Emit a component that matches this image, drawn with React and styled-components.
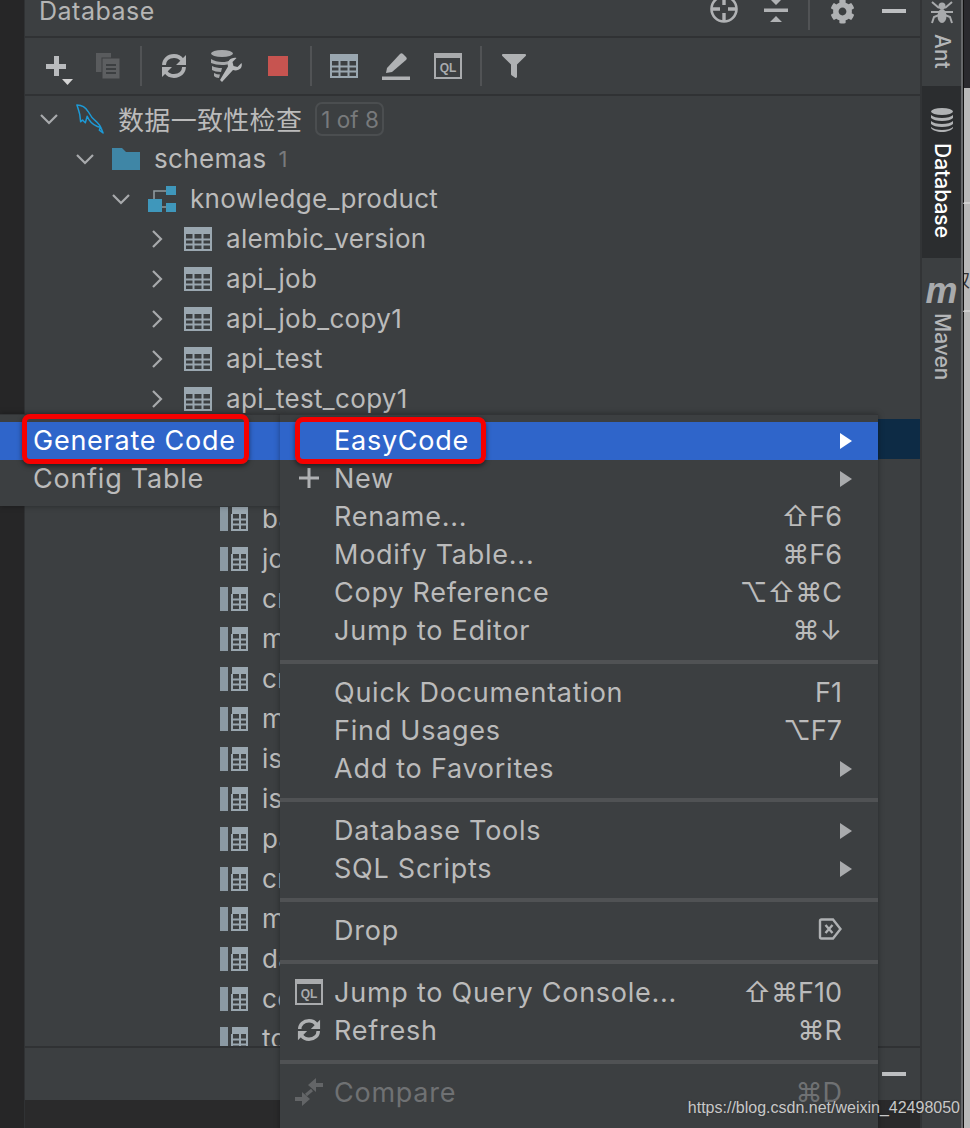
import React from 'react';
import styled, { createGlobalStyle } from 'styled-components';
import { FaCog, FaFilter } from 'react-icons/fa';

const GlobalStyle = createGlobalStyle`
  html, body {
    margin: 0;
    padding: 0;
    background: #3c3f41;
  }
  body {
    font-family: Inter, "DejaVu Sans", "Noto Sans CJK SC", sans-serif;
  }
`;

const Screen = styled.div`
  position: relative;
  width: 970px;
  height: 1128px;
  overflow: hidden;
  display: flex;
  color: #bbbbbb;
`;

const LeftStrip = styled.div`
  width: 24px;
  flex: none;
  background: #262627;
  border-right: 1px solid #303234;
`;

const Panel = styled.div`
  width: 895px;
  flex: none;
  display: flex;
  flex-direction: column;
  background: #3c3f41;
  border-right: 2px solid #323436;
`;

const Header = styled.div`
  height: 36px;
  flex: none;
  display: flex;
  align-items: flex-start;
  padding-left: 14px;
  border-bottom: 2px solid #303234;
`;

const Title = styled.div`
  flex: 1;
  font-size: 25px;
  line-height: 22px;
  letter-spacing: 0.5px;
  color: #b5b5b5;
`;

const HeaderButton = styled.div`
  width: 52px;
  height: 22px;
  display: flex;
  align-items: center;
  justify-content: center;
  color: #afb1b3;
`;

const HeaderDivider = styled.div`
  width: 2px;
  height: 30px;
  margin: 0 6px;
  background: #515355;
`;

const Toolbar = styled.div`
  height: 56px;
  flex: none;
  display: flex;
  align-items: center;
  padding-left: 8px;
  border-bottom: 2px solid #303234;
`;

const ToolButton = styled.div`
  width: ${p => p.$w || 52}px;
  height: 40px;
  display: flex;
  align-items: center;
  justify-content: center;
  color: #afb1b3;
`;

const ToolDivider = styled.div`
  width: 2px;
  height: 40px;
  margin: 0 6px 0 ${p => p.$ml || 6}px;
  background: #515355;
`;

const Tree = styled.div`
  flex: 1;
  min-height: 0;
  overflow: hidden;
  padding-top: 3px;
`;

const Row = styled.div`
  height: 40px;
  display: flex;
  align-items: center;
  padding-left: ${p => p.$depth * 36 + 13}px;
  background: ${p => (p.$selected ? '#0d2b45' : 'transparent')};
  white-space: nowrap;
`;

const Chevron = styled.div`
  width: 21px;
  height: 22px;
  flex: none;
  margin-right: 17px;
  display: flex;
  align-items: center;
  justify-content: center;
  color: #a8aaac;
`;

const NoChevron = styled.div`
  width: 38px;
  flex: none;
`;

const RowIcon = styled.div`
  width: 28px;
  height: 28px;
  flex: none;
  margin-right: 14px;
  display: flex;
  align-items: center;
  justify-content: center;
`;

const RowText = styled.span`
  margin-bottom: 2px;
  font-size: 26px;
  letter-spacing: 0.32px;
  color: #bbbbbb;
`;

const Count = styled.span`
  margin-left: 12px;
  font-size: 22px;
  color: #787a7c;
`;

const Badge = styled.span`
  margin-left: 13px;
  height: 30px;
  padding: 0 3px 0 4px;
  display: inline-flex;
  align-items: center;
  border: 2px solid #4b4e50;
  border-radius: 7px;
  font-size: 22.5px;
  color: #787a7c;
`;

const BottomBar = styled.div`
  height: 52px;
  flex: none;
  display: flex;
  align-items: center;
  justify-content: flex-end;
  padding-right: 14px;
  border-top: 2px solid #303234;
`;

const BottomMinus = styled.div`
  width: 24px;
  height: 4px;
  background: #bdbfc1;
`;

const StatusBar = styled.div`
  height: 28px;
  flex: none;
  background: #2a2a2b;
`;

const SideBar = styled.div`
  width: 39px;
  flex: none;
  display: flex;
  flex-direction: column;
  background: #3c3f41;
`;

const SideTab = styled.div`
  height: ${p => p.$h}px;
  flex: none;
  display: flex;
  flex-direction: column;
  align-items: center;
  padding-top: ${p => p.$pt}px;
  box-sizing: border-box;
  background: ${p => (p.$active ? '#2b2d2f' : 'transparent')};
`;

const SideLabel = styled.span`
  margin-top: ${p => p.$mt}px;
  writing-mode: vertical-rl;
  font-size: 21px;
  line-height: 22px;
  font-weight: 500;
  color: ${p => (p.$active ? '#ffffff' : '#b4b6b8')};
`;

const MavenMark = styled.span`
  font-family: "Liberation Sans", sans-serif;
  font-size: 36px;
  font-weight: 700;
  font-style: italic;
  line-height: 24px;
  color: #a8aaac;
`;

const EdgeColumn = styled.div`
  flex: 1;
  display: flex;
  flex-direction: column;
  border-left: 2px solid #66686a;
`;

const EdgeDark = styled.div`
  height: 88px;
  background: #2a2a2e;
  border-left: 1px solid #111111;
`;

const EdgeLight = styled.div`
  position: relative;
  height: ${p => p.$h}px;
  flex: ${p => (p.$h ? 'none' : 1)};
  overflow: hidden;
  box-sizing: border-box;
  background: #b9b9b9;
  border-left: 1px solid #111111;
  border-bottom: ${p => (p.$h ? '2px solid #d0d0d0' : 'none')};
`;

const EdgeGlyph = styled.span`
  position: absolute;
  left: -12px;
  top: 67px;
  font-size: 18px;
  line-height: 20px;
  color: #333333;
`;

const MenuPanel = styled.div`
  position: absolute;
  top: 414px;
  left: ${p => p.$left}px;
  width: ${p => p.$width}px;
  height: ${p => p.$height}px;
  box-sizing: border-box;
  padding-top: 7px;
  background: #3c3f41;
  border-top: 1px solid #323436;
  box-shadow: 0 0 6px rgba(0, 0, 0, 0.35);
`;

const MenuItem = styled.div`
  height: 38px;
  display: flex;
  align-items: center;
  box-sizing: border-box;
  padding-left: ${p => p.$pl}px;
  padding-right: 26px;
  padding-bottom: 2px;
  font-size: 27px;
  letter-spacing: 0.75px;
  white-space: nowrap;
  background: ${p => (p.$active ? '#2f65ca' : 'transparent')};
  color: ${p => (p.$active ? '#ffffff' : p.$disabled ? '#6f7173' : '#bbbbbb')};
`;

const MenuGlyph = styled.div`
  width: 40px;
  margin-left: -26px;
  flex: none;
  display: flex;
  align-items: center;
  justify-content: center;
  visibility: ${p => (p.$show ? 'visible' : 'hidden')};
`;

const MenuLabel = styled.span`
  flex: 1;
  margin-left: 5px;
`;

const Shortcut = styled.span`
  margin-right: 10px;
  font-size: 27px;
  letter-spacing: 0;
`;

const Arrow = styled.span`
  width: 0;
  height: 0;
  margin-top: 2px;
  border-left: 12px solid ${p => (p.$active ? '#ffffff' : '#a9abad')};
  border-top: 8px solid transparent;
  border-bottom: 8px solid transparent;
`;

const MenuDivider = styled.div`
  height: 4px;
  margin: 10px 0;
  background: #505254;
`;

const RedBox = styled.div`
  position: absolute;
  top: ${p => p.$top}px;
  left: ${p => p.$left}px;
  width: ${p => p.$width}px;
  height: ${p => p.$height}px;
  box-sizing: border-box;
  border: 5px solid #f50000;
  border-radius: 8px;
  box-shadow: 0 2px 5px rgba(0, 0, 0, 0.5);
`;

const Watermark = styled.div`
  position: absolute;
  right: 10px;
  top: 1098px;
  font-family: "Liberation Sans", sans-serif;
  font-size: 16px;
  line-height: 20px;
  color: #c8c8c8;
  text-shadow: 0 0 2px rgba(40, 40, 40, 0.6);
`;

const ChevronDown = () => (
  <svg width="20" height="12" viewBox="0 0 20 12" fill="none" stroke="currentColor" strokeWidth="2.2">
    <path d="M2 2l8 8 8-8" />
  </svg>
);

const ChevronRight = () => (
  <svg width="12" height="20" viewBox="0 0 12 20" fill="none" stroke="currentColor" strokeWidth="2.2">
    <path d="M2 2l8 8-8 8" />
  </svg>
);

const TableIcon = () => (
  <svg width="28" height="24" viewBox="0 0 28 24">
    <rect width="28" height="7" fill="#9aa7b0" />
    <path d="M1 7v16h26V7M1 12.5h26M1 17.5h26M1 23h26M9.5 7v16M18.5 7v16" fill="none" stroke="#9aa7b0" strokeWidth="2" />
  </svg>
);

const BarTableIcon = () => (
  <svg width="28" height="24" viewBox="0 0 28 24">
    <rect width="8" height="24" fill="#8b99a3" />
    <rect x="12" width="16" height="7" fill="#9aa7b0" />
    <path d="M12 7v16h15V7M12 12.5h15M12 17.5h15M20 7v16" fill="none" stroke="#9aa7b0" strokeWidth="2" />
  </svg>
);

const DolphinIcon = () => (
  <svg width="30" height="32" viewBox="0 0 30 32" fill="none" stroke="#1d9ad6" strokeWidth="1.6" strokeLinejoin="round">
    <path d="M1 1c5 0 9 2 12 7 2 4 5 8 9 11 2 2 4 4 5 7l2 5-4-3 1-3-3-1c-5-2-9-6-11-11l-2 7-3-3-2 2-1-8C3 7 2 4 1 1z" />
  </svg>
);

const FolderIcon = () => (
  <svg width="28" height="22" viewBox="0 0 28 22">
    <path d="M0 0h10l4 4h14v18H0z" fill="#3f86a6" />
  </svg>
);

const SchemaIcon = () => (
  <svg width="28" height="26" viewBox="0 0 28 26">
    <rect x="18" width="10" height="9" fill="#3f97bb" />
    <rect y="13" width="14" height="13" fill="#3f97bb" />
    <rect x="18" y="17" width="10" height="9" fill="#3f97bb" />
    <path d="M6 13V5h12M14 21h4" fill="none" stroke="#8f9a9f" strokeWidth="1.6" />
  </svg>
);

const PlusIcon = () => (
  <svg width="30" height="38" viewBox="0 0 30 38">
    <path d="M11 9h5v8h7v5h-7v7h-5v-7H3v-5h8z" fill="#b9bbbd" />
    <path d="M19 32h11l-5.500 6z" fill="#d4d4d4" />
  </svg>
);

const CopyIcon = () => (
  <svg width="24" height="26" viewBox="0 0 24 26">
    <rect x="0" y="0" width="15" height="19" fill="#595b5d" />
    <rect x="6" y="5" width="18" height="21" fill="#5d5f61" stroke="#3c3f41" strokeWidth="1" />
    <path d="M10 12h10M10 16h10M10 20h10" stroke="#3c3f41" strokeWidth="2" />
  </svg>
);

const RefreshIcon = ({ size = 26 }) => (
  <svg width={size} height={size} viewBox="0 0 26 26" fill="none" stroke="#afb1b3" strokeWidth="3.8">
    <path d="M3 12c0-5 4-9 10-9 3 0 6 1 8 4" />
    <path d="M23 14c0 5-4 9-10 9-3 0-6-1-8-4" />
    <path d="M25 2v10h-10z M1 24V14h10z" fill="#afb1b3" stroke="none" />
  </svg>
);

const DbToolIcon = () => (
  <svg width="32" height="32" viewBox="0 0 32 32">
    <ellipse cx="12" cy="3.5" rx="11" ry="3.5" fill="#a6a8aa" />
    <path d="M1 9c3 2 7 3 11 3s6-.5 9-2l-2 4c-2 .6-4 1-7 1-4 0-8-1-11-2zM2 16c3 1.500 6 2 10 2l-1 4c-4 0-7-1-9-2zM4 23c2 1 4 1.500 6 1.500L9 28c-2 0-4-1-5-2z" fill="#a6a8aa" />
    <path d="M10 30l2 2 11-12c3 1 6 0 8-2 1-2 1-4 .5-5l-4 4-4-1-1-4 4-4c-3-.5-6 .5-7.500 2.500-1.500 2-1.500 4-1 6z" fill="#b7b9bb" />
  </svg>
);

const StopIcon = () => (
  <svg width="20" height="20" viewBox="0 0 20 20">
    <rect width="20" height="20" fill="#c75450" />
  </svg>
);

const PencilIcon = () => (
  <svg width="28" height="28" viewBox="0 0 28 28">
    <path d="M4 21l1-5L18 2c1-1 2-1 3 0l3 3c1 1 1 2 0 3L10 20z" fill="#b0b2b4" />
    <rect y="24.500" width="28" height="3.500" fill="#b0b2b4" />
  </svg>
);

const QlBox = styled.div`
  box-sizing: border-box;
  width: 28px;
  height: 26px;
  border: 2px solid #a9abad;
  border-top-width: 5px;
  display: flex;
  align-items: center;
  justify-content: center;
  font-family: "Liberation Sans", sans-serif;
  font-size: 12px;
  font-weight: 700;
  letter-spacing: 0;
  color: #a9abad;
`;

const TargetIcon = () => (
  <svg width="28" height="28" viewBox="0 0 28 28" fill="none" stroke="#b0b2b4" strokeWidth="2.6">
    <circle cx="14" cy="12" r="12.500" />
    <path d="M14 0v8M14 16v8M2 12h8M18 12h8" strokeWidth="3.4" />
  </svg>
);

const CollapseIcon = () => (
  <svg width="24" height="22" viewBox="0 0 24 22">
    <path d="M7 0h10l-5 5zM0 8.500h24v3.500H0zM12 16l6 6H6z" fill="#b0b2b4" />
  </svg>
);

const BugIcon = () => (
  <svg width="22" height="24" viewBox="0 0 22 24" fill="none" stroke="#a8aaac" strokeWidth="2">
    <ellipse cx="11" cy="16" rx="4.500" ry="7" fill="#a8aaac" stroke="none" />
    <circle cx="11" cy="6" r="3.500" fill="#a8aaac" stroke="none" />
    <path d="M1 2l7 6M21 2l-7 6M0 12h22M1 23l2-6 5-2M21 23l-2-6-5-2" />
  </svg>
);

const DbStackIcon = () => (
  <svg width="24" height="24" viewBox="0 0 24 24">
    <ellipse cx="12" cy="3.500" rx="11" ry="3.500" fill="#b0b2b4" />
    <path d="M1 7c2 2 6 3 11 3s9-1 11-3v3c-2 2-6 3-11 3S3 12 1 10zM1 13c2 2 6 3 11 3s9-1 11-3v3c-2 2-6 3-11 3S3 18 1 16zM1 19c2 2 6 3 11 3s9-1 11-3v1c-1 2-6 4-11 4S2 22 1 20z" fill="#b0b2b4" />
  </svg>
);

const DropIcon = () => (
  <svg width="24" height="22" viewBox="0 0 24 22" fill="none" stroke="#afb1b3" strokeWidth="2.4">
    <path d="M2 3a1.500 1.500 0 0 1 1.500-1.500H15l7.500 9.500-7.500 9.500H3.500A1.500 1.500 0 0 1 2 19z" />
    <path d="M7.500 7l7 8M14.500 7l-7 8" />
  </svg>
);

const PlusGlyph = () => (
  <svg width="20" height="20" viewBox="0 0 20 20">
    <path d="M8.500 0h3v8.500H20v3h-8.500V20h-3v-8.500H0v-3h8.500z" fill="#afb1b3" />
  </svg>
);

const CompareIcon = () => (
  <svg width="28" height="28" viewBox="0 0 28 28">
    <path d="M13 7l8-7v5h7v4h-7v5z" fill="#636567" />
    <path d="M15 21l-8-7v5H0v4h7v5z" fill="#636567" />
    <path d="M17 12l-6 5" stroke="#636567" strokeWidth="3" />
  </svg>
);

const tables = ['alembic_version', 'api_job', 'api_job_copy1', 'api_test', 'api_test_copy1'];
const views = [
  'base_info', 'job_info', 'crawl_a', 'model_a', 'crawl_b', 'model_b', 'is_a_type',
  'is_b_type', 'page_info', 'crawl_c', 'model_c', 'data_info', 'config_info', 'total_info',
];

const menuGroups = [
  [
    { label: 'EasyCode', arrow: true, active: true },
    { label: 'New', arrow: true, glyph: <PlusGlyph /> },
    { label: 'Rename...', key: '⇧F6' },
    { label: 'Modify Table...', key: '⌘F6' },
    { label: 'Copy Reference', key: '⌥⇧⌘C' },
    { label: 'Jump to Editor', key: '⌘↓' },
  ],
  [
    { label: 'Quick Documentation', key: 'F1' },
    { label: 'Find Usages', key: '⌥F7' },
    { label: 'Add to Favorites', arrow: true },
  ],
  [
    { label: 'Database Tools', arrow: true },
    { label: 'SQL Scripts', arrow: true },
  ],
  [{ label: 'Drop', node: <DropIcon /> }],
  [
    { label: 'Jump to Query Console...', key: '⇧⌘F10', glyph: <QlBox>QL</QlBox> },
    { label: 'Refresh', key: '⌘R', glyph: <RefreshIcon size={24} /> },
  ],
  [{ label: 'Compare', key: '⌘D', disabled: true, glyph: <CompareIcon /> }],
];

const App = () => {
  return (
    <Screen>
      <GlobalStyle />
      <LeftStrip />
      <Panel>
        <Header>
          <Title>Database</Title>
          <HeaderButton><TargetIcon /></HeaderButton>
          <HeaderButton><CollapseIcon /></HeaderButton>
          <HeaderDivider />
          <HeaderButton><FaCog size={25} /></HeaderButton>
          <HeaderButton><BottomMinus /></HeaderButton>
        </Header>
        <Toolbar>
          <ToolButton $w={50}><PlusIcon /></ToolButton>
          <ToolButton $w={50}><CopyIcon /></ToolButton>
          <ToolDivider $ml={7} />
          <ToolButton><RefreshIcon /></ToolButton>
          <ToolButton><DbToolIcon /></ToolButton>
          <ToolButton><StopIcon /></ToolButton>
          <ToolDivider />
          <ToolButton><TableIcon /></ToolButton>
          <ToolButton><PencilIcon /></ToolButton>
          <ToolButton><QlBox>QL</QlBox></ToolButton>
          <ToolDivider />
          <ToolButton><FaFilter size={24} /></ToolButton>
        </Toolbar>
        <Tree>
          <Row $depth={0}>
            <Chevron><ChevronDown /></Chevron>
            <RowIcon><DolphinIcon /></RowIcon>
            <RowText>数据一致性检查</RowText>
            <Badge>1 of 8</Badge>
          </Row>
          <Row $depth={1}>
            <Chevron><ChevronDown /></Chevron>
            <RowIcon><FolderIcon /></RowIcon>
            <RowText>schemas</RowText>
            <Count>1</Count>
          </Row>
          <Row $depth={2}>
            <Chevron><ChevronDown /></Chevron>
            <RowIcon><SchemaIcon /></RowIcon>
            <RowText>knowledge_product</RowText>
          </Row>
          {tables.map(name => (
            <Row $depth={3} key={name}>
              <Chevron><ChevronRight /></Chevron>
              <RowIcon><TableIcon /></RowIcon>
              <RowText>{name}</RowText>
            </Row>
          ))}
          <Row $depth={3} $selected />
          <Row $depth={4} />
          {views.map(name => (
            <Row $depth={4} key={name}>
              <NoChevron />
              <RowIcon><BarTableIcon /></RowIcon>
              <RowText>{name}</RowText>
            </Row>
          ))}
        </Tree>
        <BottomBar><BottomMinus /></BottomBar>
        <StatusBar />
      </Panel>
      <SideBar>
        <SideTab $h={86} $pt={0}>
          <BugIcon />
          <SideLabel $mt={10}>Ant</SideLabel>
        </SideTab>
        <SideTab $h={172} $pt={22} $active>
          <DbStackIcon />
          <SideLabel $mt={11} $active>Database</SideLabel>
        </SideTab>
        <SideTab $h={200} $pt={21}>
          <MavenMark>m</MavenMark>
          <SideLabel $mt={10}>Maven</SideLabel>
        </SideTab>
      </SideBar>
      <EdgeColumn>
        <EdgeDark />
        <EdgeLight $h={116} />
        <EdgeLight $h={108}><EdgeGlyph>权</EdgeGlyph></EdgeLight>
        <EdgeLight />
      </EdgeColumn>

      <MenuPanel $left={0} $width={280} $height={92}>
        <MenuItem $pl={33} $active>Generate Code</MenuItem>
        <MenuItem $pl={33}>Config Table</MenuItem>
      </MenuPanel>

      <MenuPanel $left={280} $width={598} $height={720}>
        {menuGroups.map((group, i) => (
          <React.Fragment key={group[0].label}>
            {i > 0 && <MenuDivider />}
            {group.map(item => (
              <MenuItem $pl={35} $active={item.active} $disabled={item.disabled} key={item.label}>
                <MenuGlyph $show={!!item.glyph}>{item.glyph}</MenuGlyph>
                <MenuLabel>{item.label}</MenuLabel>
                {item.key && <Shortcut>{item.key}</Shortcut>}
                {item.node && <Shortcut>{item.node}</Shortcut>}
                {item.arrow && <Arrow $active={item.active} />}
              </MenuItem>
            ))}
          </React.Fragment>
        ))}
      </MenuPanel>

      <RedBox $top={414} $left={22} $width={227} $height={50} />
      <RedBox $top={417} $left={295} $width={191} $height={47} />
      <Watermark>https://blog.csdn.net/weixin_42498050</Watermark>
    </Screen>
  );
};

export default App;
